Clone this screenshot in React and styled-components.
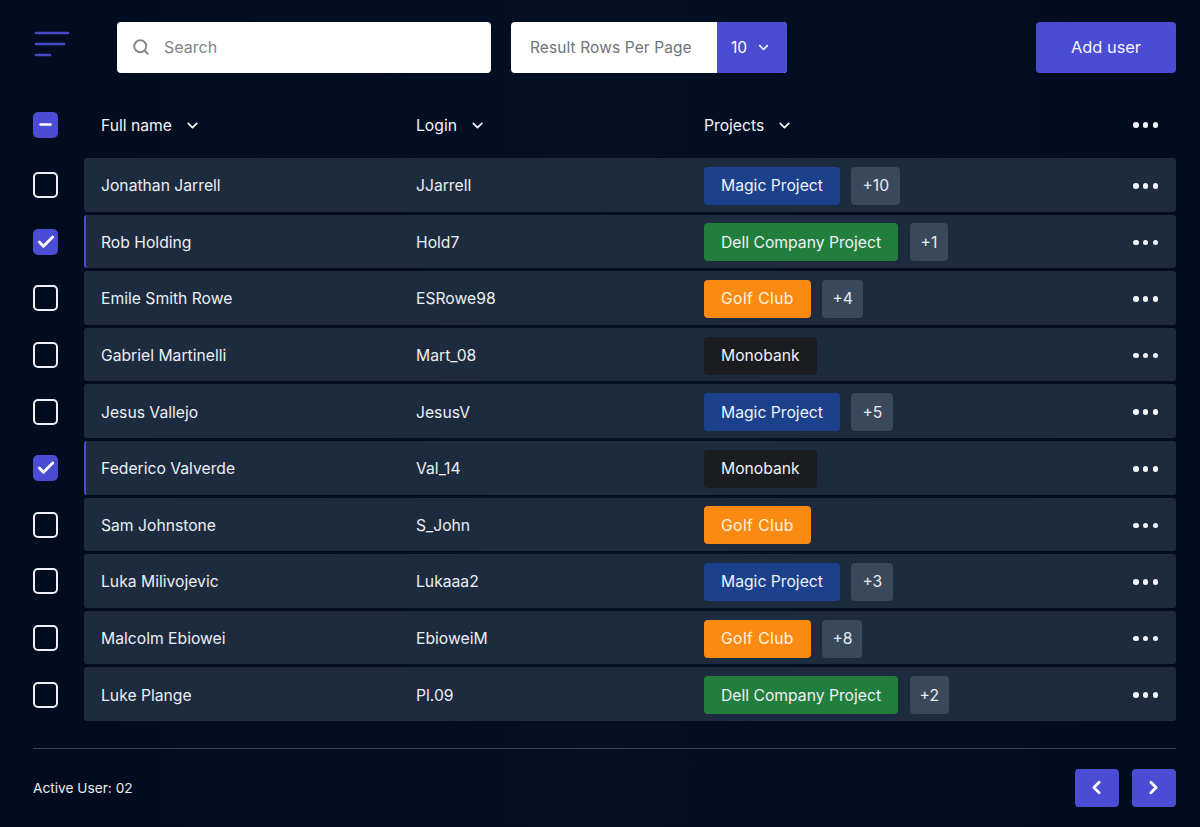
import React from "react";
import styled, { createGlobalStyle } from "styled-components";
import { Search, ChevronDown, ChevronLeft, ChevronRight, Check, Minus } from "lucide-react";

const Global = createGlobalStyle`
  html, body { margin: 0; padding: 0; background: #020e21; }
  body { font-family: "Inter", "Liberation Sans", sans-serif; color: #f2f4f8; }
  * { box-sizing: border-box; }
`;

const Page = styled.div`
  width: 1200px;
  height: 827px;
  overflow: hidden;
  padding: 22px 24px 0 33px;
  background: linear-gradient(90deg, #020c1f 0%, #030f23 50%, #020c1f 100%);
`;

const Toolbar = styled.div`
  display: flex;
  align-items: center;
  height: 51px;
`;

const MenuIcon = styled.svg`
  width: 38px;
  height: 28px;
  flex: none;
  margin-right: 46px;
  margin-bottom: 8px;
`;

const Field = styled.div`
  height: 51px;
  background: #fff;
  color: #6f7378;
  border-radius: 4px;
  display: flex;
  align-items: center;
  font-size: 16px;
`;

const SearchField = styled(Field)`
  width: 374px;
  padding: 0 0 1px 15px;
  gap: 14px;
  margin-right: 20px;
  color: #808488;
  svg { color: #85888c; }
`;

const RowsField = styled(Field)`
  width: 276px;
  overflow: hidden;
  margin-right: auto;
`;

const RowsLabel = styled.div`
  width: 206px;
  padding-left: 19px;
  font-size: 15.5px;
  letter-spacing: 0.1px;
`;

const RowsValue = styled.div`
  width: 70px;
  height: 100%;
  background: #4a4cd4;
  color: #fff;
  display: flex;
  align-items: center;
  padding-left: 14px;
  gap: 9px;
  font-size: 15.5px;
`;

const AddButton = styled.button`
  width: 140px;
  height: 51px;
  border: 0;
  padding: 0 0 2px;
  border-radius: 4px;
  background: #4a4cd4;
  color: #f4f5fb;
  font: 400 16.4px "Inter", "Liberation Sans", sans-serif;
`;

const HeaderRow = styled.div`
  display: flex;
  align-items: center;
  height: 52px;
  margin-top: 26px;
  margin-bottom: 7px;
`;

const Box = styled.div`
  width: 25px;
  height: 26px;
  flex: none;
  border-radius: 5px;
  display: flex;
  align-items: center;
  justify-content: center;
  color: #fff;
  background: ${(p) => (p.$on ? "#4a4cd4" : "transparent")};
  border: ${(p) => (p.$on ? "0" : "2px solid #eef0f4")};
`;

const HeaderBox = styled(Box)`
  margin-top: -1px;
`;

const CheckCell = styled.div`
  width: 51px;
  flex: none;
  display: flex;
  align-items: center;
`;

const RowCheckCell = styled(CheckCell)`
  padding-top: 1px;
`;

const Columns = styled.div`
  flex: 1;
  height: 100%;
  display: grid;
  grid-template-columns: 315px 288px 1fr 43px;
  align-items: center;
  padding-left: 17px;
  font-size: 15.7px;
`;

const HeadCell = styled.div`
  display: flex;
  align-items: center;
  gap: 12px;
`;

const List = styled.div`
  display: flex;
  flex-direction: column;
  gap: 3px;
`;

const RowWrap = styled.div`
  display: flex;
  height: 53.6px;
`;

const Row = styled(Columns)`
  background: #1d2b3f;
  border-radius: 3px;
  padding-top: 2px;
  padding-left: ${(p) => (p.$on ? "15px" : "17px")};
  border-left: ${(p) => (p.$on ? "2px solid #4a4cd4" : "0")};
  color: #eceff3;
`;

const Tags = styled.div`
  display: flex;
  align-items: center;
  gap: 11.5px;
`;

const tagColors = {
  blue: "#1b418c",
  green: "#217e3d",
  orange: "#fb8a12",
  black: "#1b1c20",
};

const Tag = styled.div`
  height: 38px;
  padding: 0 17px;
  border-radius: 4px;
  display: flex;
  align-items: center;
  background: ${(p) => tagColors[p.$kind]};
  color: ${(p) => (p.$kind === "orange" ? "#fff3e0" : "#eef1f6")};
  letter-spacing: ${(p) => (p.$kind === "orange" ? "0.4px" : "0")};
  font-size: 15.7px;
`;

const Count = styled.div`
  height: 38px;
  padding: 0 ${(p) => p.$pad}px;
  border-radius: 4px;
  background: #3a485c;
  display: flex;
  align-items: center;
  font-size: 15.7px;
  color: #e9ecf1;
`;

const Dots = styled.div`
  display: flex;
  gap: 4.3px;
  span {
    width: 5.6px;
    height: 5.6px;
    border-radius: 50%;
    background: #f4f6fa;
  }
`;

const Footer = styled.div`
  margin-top: 27px;
  border-top: 1px solid #3a4454;
  display: flex;
  align-items: center;
  justify-content: space-between;
  padding-top: 20px;
`;

const Active = styled.div`
  font-size: 13.7px;
  color: #e9ecf1;
`;

const Pager = styled.div`
  display: flex;
  gap: 13px;
`;

const PageButton = styled.button`
  width: 44px;
  height: 38px;
  border: 0;
  border-radius: 4px;
  background: #4a4cd4;
  color: #fff;
  display: flex;
  align-items: center;
  justify-content: center;
  padding: 0 1px 0 0;
`;

const users = [
  ["Jonathan Jarrell", "JJarrell", "Magic Project", "blue", "+10", 11, false],
  ["Rob Holding", "Hold7", "Dell Company Project", "green", "+1", 11, true],
  ["Emile Smith Rowe", "ESRowe98", "Golf Club", "orange", "+4", 10, false],
  ["Gabriel Martinelli", "Mart_08", "Monobank", "black", null, 0, false],
  ["Jesus Vallejo", "JesusV", "Magic Project", "blue", "+5", 11, false],
  ["Federico Valverde", "Val_14", "Monobank", "black", null, 0, true],
  ["Sam Johnstone", "S_John", "Golf Club", "orange", null, 0, false],
  ["Luka Milivojevic", "Lukaaa2", "Magic Project", "blue", "+3", 11, false],
  ["Malcolm Ebiowei", "EbioweiM", "Golf Club", "orange", "+8", 10, false],
  ["Luke Plange", "Pl.09", "Dell Company Project", "green", "+2", 10, false],
];

const MoreDots = () => (
  <Dots>
    <span />
    <span />
    <span />
  </Dots>
);

const Head = ({ children }) => (
  <HeadCell>
    {children}
    <ChevronDown size={17} strokeWidth={2.4} />
  </HeadCell>
);

export default function App() {
  return (
    <Page>
      <Global />
      <Toolbar>
        <MenuIcon viewBox="0 0 38 28">
          <g stroke="#4649c8" strokeWidth="2.6" strokeLinecap="round">
            <line x1="3" y1="3" x2="35" y2="3" />
            <line x1="3" y1="14" x2="31" y2="14" />
            <line x1="3" y1="25" x2="17" y2="25" />
          </g>
        </MenuIcon>
        <SearchField>
          <Search size={18} strokeWidth={2.6} />
          Search
        </SearchField>
        <RowsField>
          <RowsLabel>Result Rows Per Page</RowsLabel>
          <RowsValue>
            10
            <ChevronDown size={15} strokeWidth={2.6} />
          </RowsValue>
        </RowsField>
        <AddButton>Add user</AddButton>
      </Toolbar>
      <HeaderRow>
        <CheckCell>
          <HeaderBox $on>
            <Minus size={17} strokeWidth={3.6} />
          </HeaderBox>
        </CheckCell>
        <Columns>
          <Head>Full name</Head>
          <Head>Login</Head>
          <Head>Projects</Head>
          <MoreDots />
        </Columns>
      </HeaderRow>
      <List>
        {users.map(([name, login, tag, kind, count, pad, on]) => (
          <RowWrap key={name}>
            <RowCheckCell>
              <Box $on={on}>{on && <Check size={20} strokeWidth={3.4} />}</Box>
            </RowCheckCell>
            <Row $on={on}>
              <div>{name}</div>
              <div>{login}</div>
              <Tags>
                <Tag $kind={kind}>{tag}</Tag>
                {count && <Count $pad={pad}>{count}</Count>}
              </Tags>
              <MoreDots />
            </Row>
          </RowWrap>
        ))}
      </List>
      <Footer>
        <Active>Active User: 02</Active>
        <Pager>
          <PageButton>
            <ChevronLeft size={21} strokeWidth={3.2} />
          </PageButton>
          <PageButton>
            <ChevronRight size={21} strokeWidth={3.2} />
          </PageButton>
        </Pager>
      </Footer>
    </Page>
  );
}
